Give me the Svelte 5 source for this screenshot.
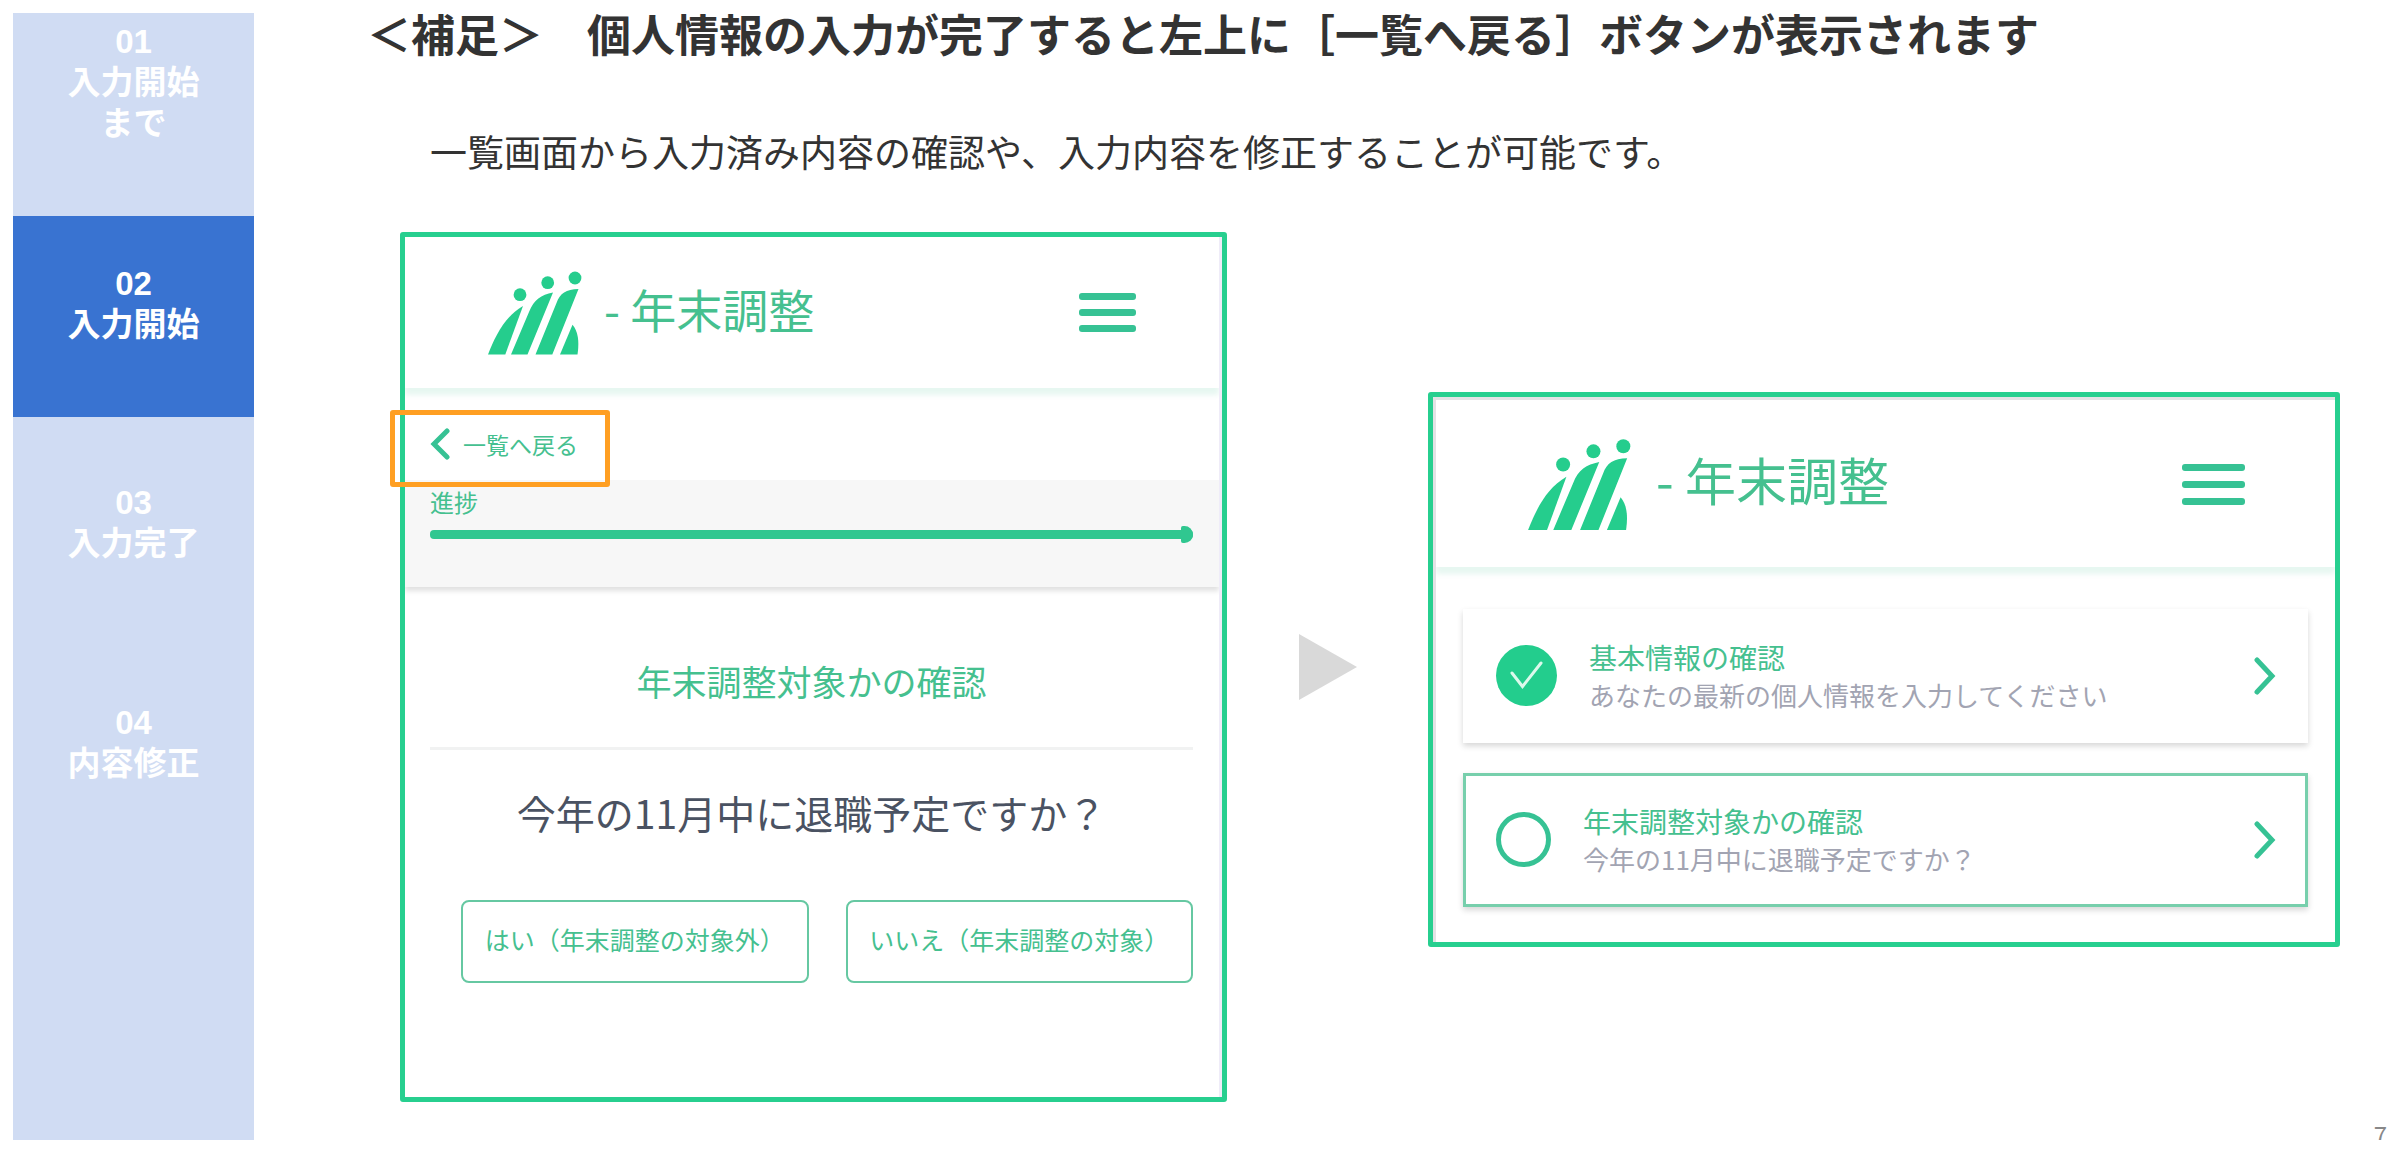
<script lang="ts">
    interface Step {
        no: string;
        lines: string[];
    }

    interface Task {
        title: string;
        detail: string;
        done: boolean;
    }

    const steps: Step[] = [
        { no: '01', lines: ['入力開始', 'まで'] },
        { no: '02', lines: ['入力開始'] },
        { no: '03', lines: ['入力完了'] },
        { no: '04', lines: ['内容修正'] },
    ];
    const currentStep = '02';

    const tasks: Task[] = [
        { title: '基本情報の確認', detail: 'あなたの最新の個人情報を入力してください', done: true },
        { title: '年末調整対象かの確認', detail: '今年の11月中に退職予定ですか？', done: false },
    ];

    const progress = 100;
</script>

{#snippet appHeader()}
    <header class="app-header">
        <div class="brand">
            <svg class="logo" viewBox="0 0 95 84" aria-hidden="true">
                <circle cx="33" cy="23.7" r="6.4" />
                <circle cx="60.7" cy="11.7" r="6.4" />
                <circle cx="88" cy="7" r="6.4" />
                <path d="M1 83.5C8 66 17 46 36 35L18.3 83.5Z" />
                <path d="M24 83.5L42 41C47 28.5 54 24 66 21.5L40.5 83.5Z" />
                <path d="M48.5 83.5L69.5 32C73 22 79 18.5 91.5 18L65.3 83.5Z" />
                <path d="M73 83.5L85.5 53.7C91 60 92.5 70 90.5 83.5Z" />
            </svg>
            <span class="brand-name">- 年末調整</span>
        </div>
        <button type="button" class="menu" aria-label="メニュー">
            <span></span>
            <span></span>
            <span></span>
        </button>
    </header>
{/snippet}

<div class="page">
    <nav class="steps" aria-label="手順">
        {#each steps as step (step.no)}
            <div class="step" class:current={step.no === currentStep}>
                <span>{step.no}</span>
                {#each step.lines as line}
                    <span>{line}</span>
                {/each}
            </div>
        {/each}
    </nav>

    <main>
        <h1>＜補足＞　個人情報の入力が完了すると左上に［一覧へ戻る］ボタンが表示されます</h1>
        <p class="lead">一覧画面から入力済み内容の確認や、入力内容を修正することが可能です。</p>

        <div class="stage">
            <section class="screen question-screen">
                <div class="screen-body">
                    {@render appHeader()}
                    <div class="back-row">
                        <a class="back" href="#list">
                            <svg viewBox="0 0 20 32" aria-hidden="true"><path d="M17 3L4 16L17 29" /></svg>
                            一覧へ戻る
                        </a>
                    </div>
                    <div class="progress">
                        <span id="progress-label">進捗</span>
                        <div
                            class="track"
                            role="progressbar"
                            aria-labelledby="progress-label"
                            aria-valuenow={progress}
                            aria-valuemin="0"
                            aria-valuemax="100"
                        >
                            <div class="fill" style="width: {progress}%"></div>
                        </div>
                    </div>
                    <div class="form">
                        <h2>年末調整対象かの確認</h2>
                        <p>今年の11月中に退職予定ですか？</p>
                        <div class="answers">
                            <button type="button">はい（年末調整の対象外）</button>
                            <button type="button">いいえ（年末調整の対象）</button>
                        </div>
                    </div>
                </div>
            </section>

            <svg class="arrow" viewBox="0 0 58 66" aria-hidden="true"><path d="M0 0L58 33L0 66Z" /></svg>

            <section class="screen list-screen" id="list">
                <div class="screen-body">
                    {@render appHeader()}
                    <div class="tasks">
                        {#each tasks as task}
                            <a class="task" class:open={!task.done} href="#task">
                                {#if task.done}
                                    <svg class="status" viewBox="0 0 61 61" aria-hidden="true">
                                        <circle class="disc" cx="30.5" cy="30.5" r="30.5" />
                                        <path class="tick" d="M16 28L26.5 41.5L45 18" />
                                    </svg>
                                {:else}
                                    <svg class="status" viewBox="0 0 55 55" aria-hidden="true">
                                        <circle class="ring" cx="27.5" cy="27.5" r="25" />
                                    </svg>
                                {/if}
                                <span class="task-text">
                                    <strong>{task.title}</strong>
                                    <span>{task.detail}</span>
                                </span>
                                <svg class="chevron" viewBox="0 0 22 38" aria-hidden="true"><path d="M3 3L18 19L3 35" /></svg>
                            </a>
                        {/each}
                    </div>
                </div>
            </section>
        </div>

        <footer>7</footer>
    </main>
</div>

<style>
    :global(body) { background: #fff; }

    .page {
        --green: #27cf8f;
        --green-text: #45c08f;
        --green-line: #36c294;
        display: flex; box-sizing: border-box; min-height: 100vh; padding: 13px;
        font-family: "Noto Sans CJK JP", sans-serif; color: #333;
    }
    h1, h2, p { margin: 0; font-weight: 400; }
    a { color: inherit; text-decoration: none; }
    button { font: inherit; cursor: pointer; background: none; border: none; padding: 0; }

    .steps {
        flex: 0 0 241px; background: #d0dcf3; color: #fff;
        font: 700 33px/41px "Liberation Sans", "Noto Sans CJK JP", sans-serif;
    }
    .step {
        display: flex; flex-direction: column; align-items: center;
        box-sizing: border-box; min-height: 220px; padding-top: 65px;
    }
    .step:first-child { min-height: 203px; padding-top: 8px; }
    .step.current { min-height: 201px; padding-top: 47px; background: #3973d1; }

    main { flex: 1; display: flex; flex-direction: column; min-width: 0; }
    h1 { padding-left: 113px; font-size: 44px; font-weight: 700; line-height: 40px; }
    .lead { padding: 78px 0 61px 176px; font-size: 37px; line-height: 40px; }

    .stage {
        display: grid; grid-template-columns: 827fr 201fr 912fr; align-items: center;
        padding: 0 47px 0 146px;
    }
    .screen { border: 5px solid var(--green); border-radius: 3px; background: #fff; }
    .question-screen .screen-body { border-right: 3px solid #efecf8; }
    .list-screen { margin-top: 4px; }
    .list-screen .screen-body { border: solid #e3e2e5; border-width: 3px 0 0 3px; }
    .arrow { width: 58px; height: 66px; justify-self: center; fill: #d9d9d9; }

    .app-header {
        display: flex; align-items: center; justify-content: space-between;
        box-sizing: border-box; height: 151px; padding: 0 83px 0 82px;
        box-shadow: 0 7px 5px rgba(39, 180, 130, 0.11); clip-path: inset(0 0 -16px 0);
    }
    .list-screen .app-header { height: 167px; padding: 2px 90px 0 91px; }
    .brand { display: flex; align-items: center; gap: 22px; }
    .logo { width: 95px; height: 84px; fill: #25cd8d; }
    .brand-name { padding-bottom: 10px; font-size: 46px; line-height: 46px; color: var(--green-text); }
    .list-screen .brand { gap: 25px; }
    .list-screen .logo { width: 104px; height: 93px; }
    .list-screen .brand-name { font-size: 51px; }
    .menu { display: flex; flex-direction: column; gap: 9px; width: 57px; }
    .menu span { height: 7px; border-radius: 3px; background: var(--green-line); }
    .list-screen .menu { gap: 10px; width: 63px; }

    .back-row { display: flex; box-sizing: border-box; height: 92px; padding: 20px 0 0 25px; align-items: center; }
    .back {
        position: relative; z-index: 1; display: flex; align-items: center; gap: 13px;
        font-size: 23px; line-height: 28px; color: var(--green-text);
    }
    .back svg { width: 20px; height: 32px; }
    .back path, .chevron path {
        fill: none; stroke: var(--green-line); stroke-width: 5; stroke-linecap: round;
    }
    /* callout around the link, hangs over the screen edge */
    .back::after {
        content: ""; position: absolute; inset: -18px -32px -27px -40px;
        border: 5px solid #ff9f22; border-radius: 3px;
    }

    .progress {
        padding: 9px 26px 48px 25px; background: #f7f7f7;
        font-size: 24px; line-height: 26px; color: var(--green-text);
        box-shadow: 0 4px 5px rgba(0, 0, 0, 0.12); clip-path: inset(0 0 -16px 0);
    }
    .track { margin-top: 15px; }
    .fill { position: relative; height: 9px; border-radius: 4px; background: #30c790; }
    .fill::after {
        content: ""; position: absolute; top: -4px; right: 0; width: 12px; height: 17px;
        border-radius: 2px 9px 9px 2px; background: #30c790;
    }

    .form { padding: 74px 26px 114px 25px; text-align: center; }
    h2 {
        padding-bottom: 46px; border-bottom: 3px solid #f1f2f2;
        font-size: 35px; line-height: 40px; color: var(--green-text);
    }
    .form p { padding: 38px 0 64px; font-size: 39px; line-height: 48px; color: #4a5262; }
    .answers { display: grid; grid-template-columns: 1fr 1fr; gap: 37px; padding-left: 31px; }
    .answers button {
        height: 83px; padding-bottom: 6px; border: 2px solid #66c8a2; border-radius: 8px;
        white-space: nowrap; font-size: 25px; color: var(--green-text);
    }

    .tasks { display: grid; gap: 30px; padding: 42px 27px 35px; }
    .task {
        display: flex; align-items: center; gap: 32px; padding: 26px 29px 26px 30px;
        border: 3px solid #fff; background: #fff; box-shadow: 0 3px 6px rgba(0, 0, 0, 0.16);
    }
    .task.open { border-color: #77cfac; }
    .status { width: 61px; height: 61px; }
    .open .status { width: 55px; height: 55px; }
    .disc { fill: #23cd8d; }
    .ring { fill: none; stroke: var(--green-line); stroke-width: 5; }
    .tick { fill: none; stroke: #dcf9ec; stroke-width: 3; stroke-linecap: round; }
    .task-text { flex: 1; display: flex; flex-direction: column; font-size: 26px; line-height: 38px; color: #a2a4b2; }
    .task-text strong { font-size: 28px; font-weight: 400; color: var(--green-text); }
    .chevron { width: 22px; height: 38px; }

    /* the page number is cut off by the slide's lower edge */
    footer {
        height: 18px; margin-top: auto; overflow: hidden; text-align: right;
        font-size: 24px; line-height: 24px; color: #888;
    }
</style>
